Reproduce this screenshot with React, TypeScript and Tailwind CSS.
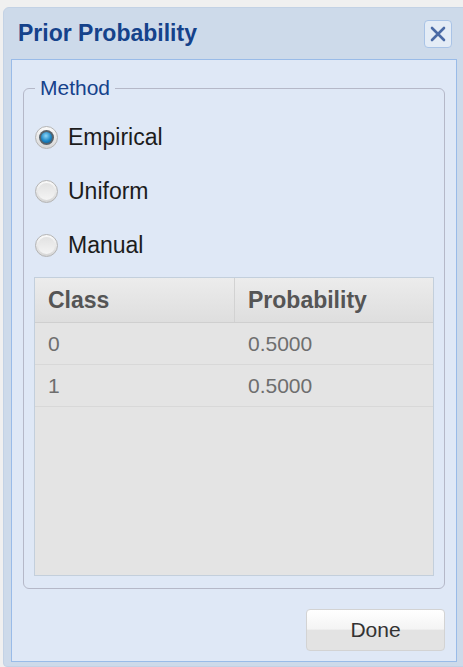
import { useState } from "react";

const font = "font-['Liberation_Sans',Arial,sans-serif]";

function Radio({ checked }: { checked: boolean }) {
	return (
		<span className="flex h-[23px] w-[23px] items-center justify-center rounded-full border border-[#b4b4b4] bg-[linear-gradient(#fafafa,#d6d6d6)]">
			{checked ? (
				<span className="flex h-[15px] w-[15px] items-center justify-center rounded-full bg-[#56626b]">
					<span className="h-[11px] w-[11px] rounded-full bg-[radial-gradient(circle_at_45%_35%,#8fd6f7,#1b86c6_55%,#0d4f80)]" />
				</span>
			) : (
				<span className="h-[17px] w-[17px] rounded-full bg-[linear-gradient(#e2e2e2,#f4f4f4)]" />
			)}
		</span>
	);
}

const rows = [
	{ cls: "0", prob: "0.5000" },
	{ cls: "1", prob: "0.5000" },
];

export default function App() {
	const [method, setMethod] = useState("Empirical");

	return (
		<div className={`h-[667px] w-[463px] overflow-hidden bg-[#f0f0f0] pl-[3px] pt-[7px] ${font}`}>
			{/* window */}
			<div className="w-[462px] rounded-tl-[6px] rounded-bl-[4px] border border-[#c3d2e5] bg-[#cddaea] px-[7px] pb-[4px]">
				{/* title bar */}
				<div className="flex h-[51px] items-center justify-between pl-[7px] pr-[5px]">
					<span className="text-[23px] font-bold text-[#15428b]">Prior Probability</span>
					<button className="flex h-[28px] w-[28px] items-center justify-center rounded-[4px] border border-[#a9c3e6] bg-[#e4ecf6]">
						<svg width="18" height="18" viewBox="0 0 18 18">
							<path d="M3 3L15 15M15 3L3 15" stroke="#4a6aa5" strokeWidth="2.6" strokeLinecap="round" />
						</svg>
					</button>
				</div>

				{/* body */}
				<div className="border border-[#99bbe8] bg-[#dfe8f6] px-[11px] pb-[10px] pt-[16px]">
					<fieldset className="rounded-[6px] border border-[#b5b8c8] px-[10px] pb-[12px]">
						<legend className="ml-[1px] px-[5px] text-[21px] leading-[24px] text-[#15428b]">Method</legend>
						<div className="flex flex-col pt-[10px]">
							{["Empirical", "Uniform", "Manual"].map((m) => (
								<label
									key={m}
									className="flex h-[54px] cursor-pointer items-center gap-[10px] pl-px"
									onClick={() => setMethod(m)}
								>
									<Radio checked={method === m} />
									<span className="text-[23px] text-[#1c1c1c]">{m}</span>
								</label>
							))}
						</div>

						{/* grid */}
						<div className="mt-[5px] flex h-[299px] flex-col border border-[#c3cfdc] bg-[#e4e4e4]">
							<div className="flex h-[45px] border-b border-[#cfcfcf] bg-[linear-gradient(#ececec,#dedede)] text-[23px] font-bold text-[#555]">
								<div className="flex w-[200px] items-center border-r border-[#d2d2d2] pl-[13px]">Class</div>
								<div className="flex flex-1 items-center pl-[13px]">Probability</div>
							</div>
							{rows.map((r) => (
								<div key={r.cls} className="flex h-[42px] border-b border-[#d8d8d8] text-[21px] text-[#6e6e6e]">
									<div className="flex w-[200px] items-center pl-[13px]">{r.cls}</div>
									<div className="flex flex-1 items-center pl-[13px]">{r.prob}</div>
								</div>
							))}
						</div>
					</fieldset>

					<div className="mt-[20px] flex justify-end">
						<button className="h-[42px] w-[139px] rounded-[4px] border border-[#d3d3d3] bg-[linear-gradient(#ffffff,#f4f4f4_48%,#e3e3e3_50%,#e3e3e3)] text-[21px] text-[#333]">
							Done
						</button>
					</div>
				</div>
			</div>
		</div>
	);
}
